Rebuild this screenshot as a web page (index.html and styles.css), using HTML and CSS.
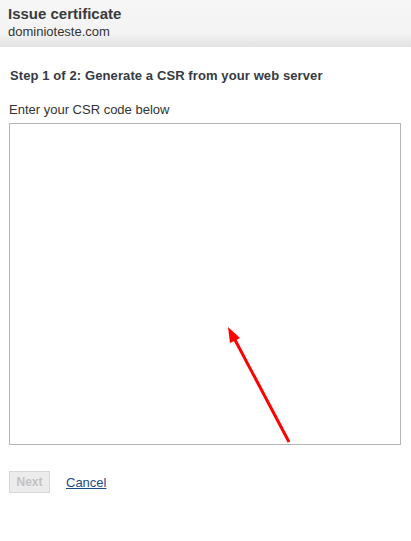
FILE: index.html
```html
<!DOCTYPE html>
<html>
<head>
<meta charset="utf-8">
<link rel="stylesheet" href="styles.css">
</head>
<body>
<div class="header">
  <div class="title">Issue certificate</div>
  <div class="domain">dominioteste.com</div>
</div>
<div class="content">
  <div class="step">Step 1 of 2: Generate a CSR from your web server</div>
  <label class="label" for="csr">Enter your CSR code below</label>
  <div class="field">
    <textarea id="csr" class="csr"></textarea>
    <svg class="arrow" width="80" height="130" viewBox="0 0 80 130">
      <line x1="69" y1="121" x2="14" y2="17" stroke="#ff0000" stroke-width="3"/>
      <polygon points="8,6 20,17 10,22" fill="#ff0000"/>
    </svg>
  </div>
  <div class="actions">
    <button class="next" disabled>Next</button>
    <a class="cancel" href="#">Cancel</a>
  </div>
</div>
</body>
</html>
```
FILE: styles.css
```css
html, body {
  margin: 0;
  padding: 0;
  background: #ffffff;
  font-family: "Liberation Sans", Arial, sans-serif;
  color: #333333;
}
.header {
  height: 47px;
  box-sizing: border-box;
  padding: 5px 8px 0 8px;
  background: linear-gradient(to bottom, #f6f6f6 0%, #f4f4f4 70%, #e2e2e2 100%);
}
.title {
  font-size: 15px;
  font-weight: bold;
  line-height: 18px;
  color: #3a3a3a;
}
.domain {
  font-size: 13px;
  line-height: 18px;
  color: #333;
}
.content {
  padding: 21px 9px 0 9px;
}
.step {
  font-size: 13px;
  font-weight: bold;
  line-height: 16px;
  padding-left: 1px;
  letter-spacing: 0.1px;
  color: #363a42;
}
.label {
  display: block;
  margin-top: 18px;
  font-size: 13px;
  line-height: 16px;
}
.field {
  position: relative;
  margin-top: 5px;
  width: 392px;
  height: 322px;
}
.csr {
  display: block;
  box-sizing: border-box;
  width: 392px;
  height: 322px;
  margin: 0;
  border: 1px solid #b5b5b5;
  resize: none;
  background: #fff;
}
.arrow {
  position: absolute;
  left: 211px;
  top: 198px;
}
.actions {
  display: flex;
  align-items: center;
  gap: 16px;
  margin-top: 26px;
}
.next {
  width: 41px;
  height: 22px;
  box-sizing: border-box;
  border: 1px solid #d6d6d6;
  background: #ececec;
  color: #c2c2c2;
  font-family: "Liberation Sans", Arial, sans-serif;
  font-size: 12px;
  font-weight: bold;
  padding: 0;
}
.cancel {
  font-size: 13px;
  color: #1a4a8a;
  text-decoration: underline;
}
```
